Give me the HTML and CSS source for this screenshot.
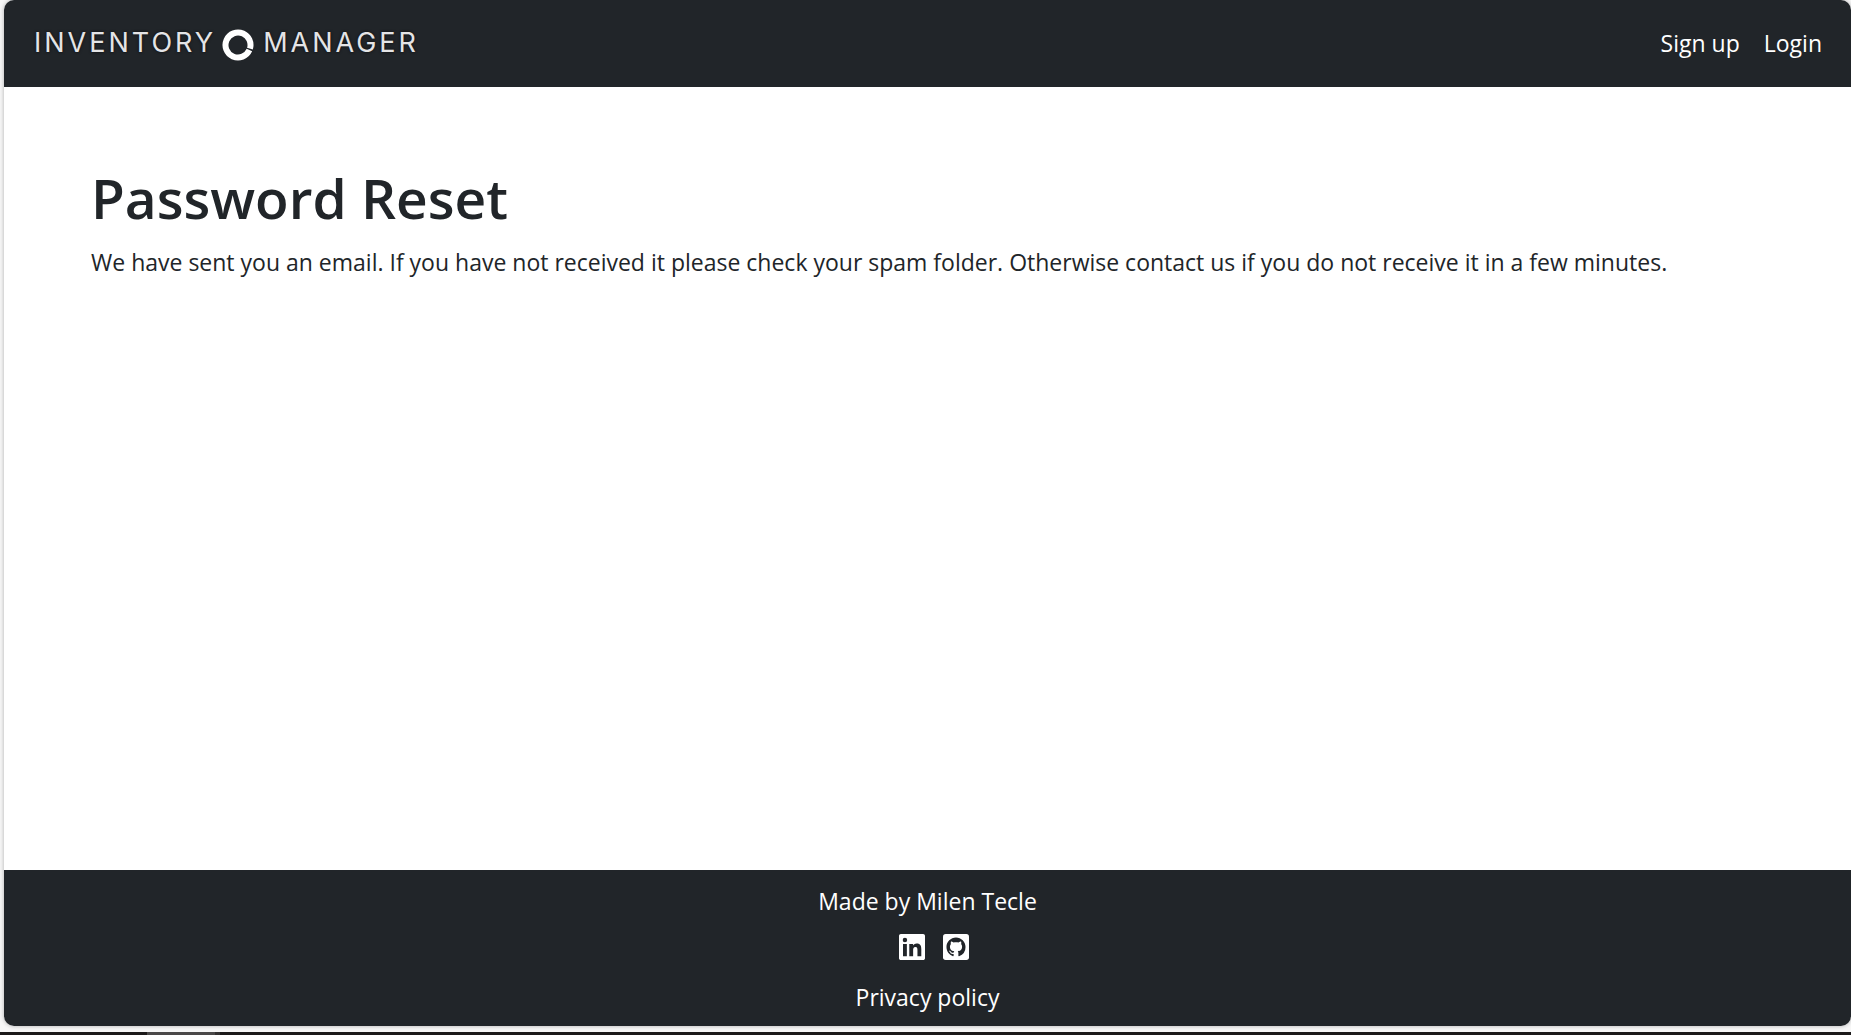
FILE: index.html
```html
<!DOCTYPE html>
<html lang="en">
<head>
<meta charset="utf-8">
<meta name="viewport" content="width=device-width, initial-scale=1">
<title>Password Reset</title>
<link rel="stylesheet" href="styles.css">
</head>
<body>
<div class="page">
  <header class="navbar">
    <a class="brand" href="#">
      <span>INVENTORY</span>
      <svg class="brand-mark" viewBox="0 0 32 32" aria-hidden="true"><circle cx="16" cy="16" r="12.500" stroke-dasharray="76.500 2.040" transform="rotate(24 16 16)"/></svg>
      <span>MANAGER</span>
    </a>
    <nav class="nav-links">
      <a href="#">Sign up</a>
      <a href="#">Login</a>
    </nav>
  </header>
  <main class="content">
    <h1>Password Reset</h1>
    <p>We have sent you an email. If you have not received it please check your spam folder. Otherwise contact us if you do not receive it in a few minutes.</p>
  </main>
  <footer class="footer">
    <p>Made by Milen Tecle</p>
    <div class="social">
      <a href="#" aria-label="LinkedIn"><svg viewBox="0 0 448 448"><path d="M416 0H31.900C14.300 0 0 14.500 0 32.300v383.400C0 433.500 14.300 448 31.900 448H416c17.600 0 32-14.500 32-32.300V32.300C448 14.500 433.600 0 416 0zM135.400 384H69V170.200h66.500V384zM102.200 141a38.500 38.500 0 1 1 0-77 38.500 38.500 0 0 1 0 77zM384.300 384h-66.400V280c0-24.800-.5-56.700-34.500-56.700-34.600 0-39.900 27-39.900 54.900V384h-66.400V170.200h63.700v29.200h.9c8.900-16.800 30.600-34.500 62.900-34.500 67.200 0 79.700 44.300 79.700 101.900V384z"/></svg></a>
      <a href="#" aria-label="GitHub"><svg viewBox="0 0 24 24"><rect width="24" height="24" rx="2.500"/><path class="cat" transform="translate(3.200 3.300) scale(1.100)" d="M8 0C3.580 0 0 3.580 0 8c0 3.540 2.290 6.530 5.470 7.590.4.070.55-.17.550-.38 0-.19-.01-.82-.01-1.490-2.010.37-2.530-.49-2.690-.94-.09-.23-.48-.94-.82-1.130-.28-.15-.68-.52-.01-.53.63-.01 1.080.58 1.230.82.72 1.210 1.870.87 2.330.66.07-.52.28-.87.510-1.070-1.780-.2-3.640-.89-3.640-3.950 0-.87.310-1.590.82-2.150-.08-.2-.36-1.020.08-2.120 0 0 .67-.21 2.200.82.64-.18 1.320-.27 2-.27s1.360.09 2 .27c1.530-1.040 2.200-.82 2.200-.82.44 1.100.16 1.920.08 2.120.51.56.82 1.270.82 2.150 0 3.070-1.870 3.750-3.650 3.950.29.250.54.73.54 1.480 0 1.070-.01 1.930-.01 2.200 0 .21.15.46.55.38A8.010 8.010 0 0 0 16 8c0-4.420-3.580-8-8-8z"/></svg></a>
    </div>
    <a href="#">Privacy policy</a>
  </footer>
</div>
<div class="taskbar"><span></span></div>
</body>
</html>
```
FILE: styles.css
```css
* { box-sizing: border-box; }
body {
  margin: 0;
  min-height: 100vh;
  display: flex;
  flex-direction: column;
  background: #f7f7f7;
  color: #212529;
  font: 23px/36px "Open Sans", "Noto Sans", sans-serif;
}
h1, p { margin: 0; }
a { color: inherit; text-decoration: none; }
.page {
  flex: 1;
  display: flex;
  flex-direction: column;
  margin: 0 0 6px 4px;
  background: #fff;
  border-radius: 10px;
  overflow: hidden;
  box-shadow: 0 0 4px rgba(0, 0, 0, .3);
}
.navbar {
  display: flex;
  align-items: center;
  justify-content: space-between;
  padding: 25px 29px 26px 30px;
  background: #212529;
  color: #fff;
}
.brand {
  display: flex;
  align-items: center;
  gap: 6px;
  color: #e4e4e6;
  font: 27px/36px Inter, sans-serif;
  letter-spacing: 3px;
  text-shadow: 0 0 3px #0b0c0e;
}
.brand-mark {
  width: 32px;
  height: 32px;
  margin: 4px 3px 0 0;
  fill: none;
  stroke: #fff;
  stroke-width: 6;
}
.nav-links { display: flex; gap: 24px; }
.content { flex: 1; padding: 75px 87px; }
h1 {
  margin-bottom: 10px;
  font-size: 55px;
  line-height: 72px;
  font-weight: 600;
}
.footer {
  display: flex;
  flex-direction: column;
  align-items: center;
  padding: 13px 0 11px;
  background: #212529;
  color: #fff;
}
.social { display: flex; gap: 18px; padding: 15px 0 19px 12px; }
.social a { display: flex; }
.social svg { width: 26px; height: 26px; fill: #fff; }
.social .cat { fill: #212529; }
.taskbar { height: 3px; padding-left: 147px; background: #1b1919; }
.taskbar span { display: block; width: 73px; height: 3px; background: #4a4848; border-right: 5px solid #333131; }
```
